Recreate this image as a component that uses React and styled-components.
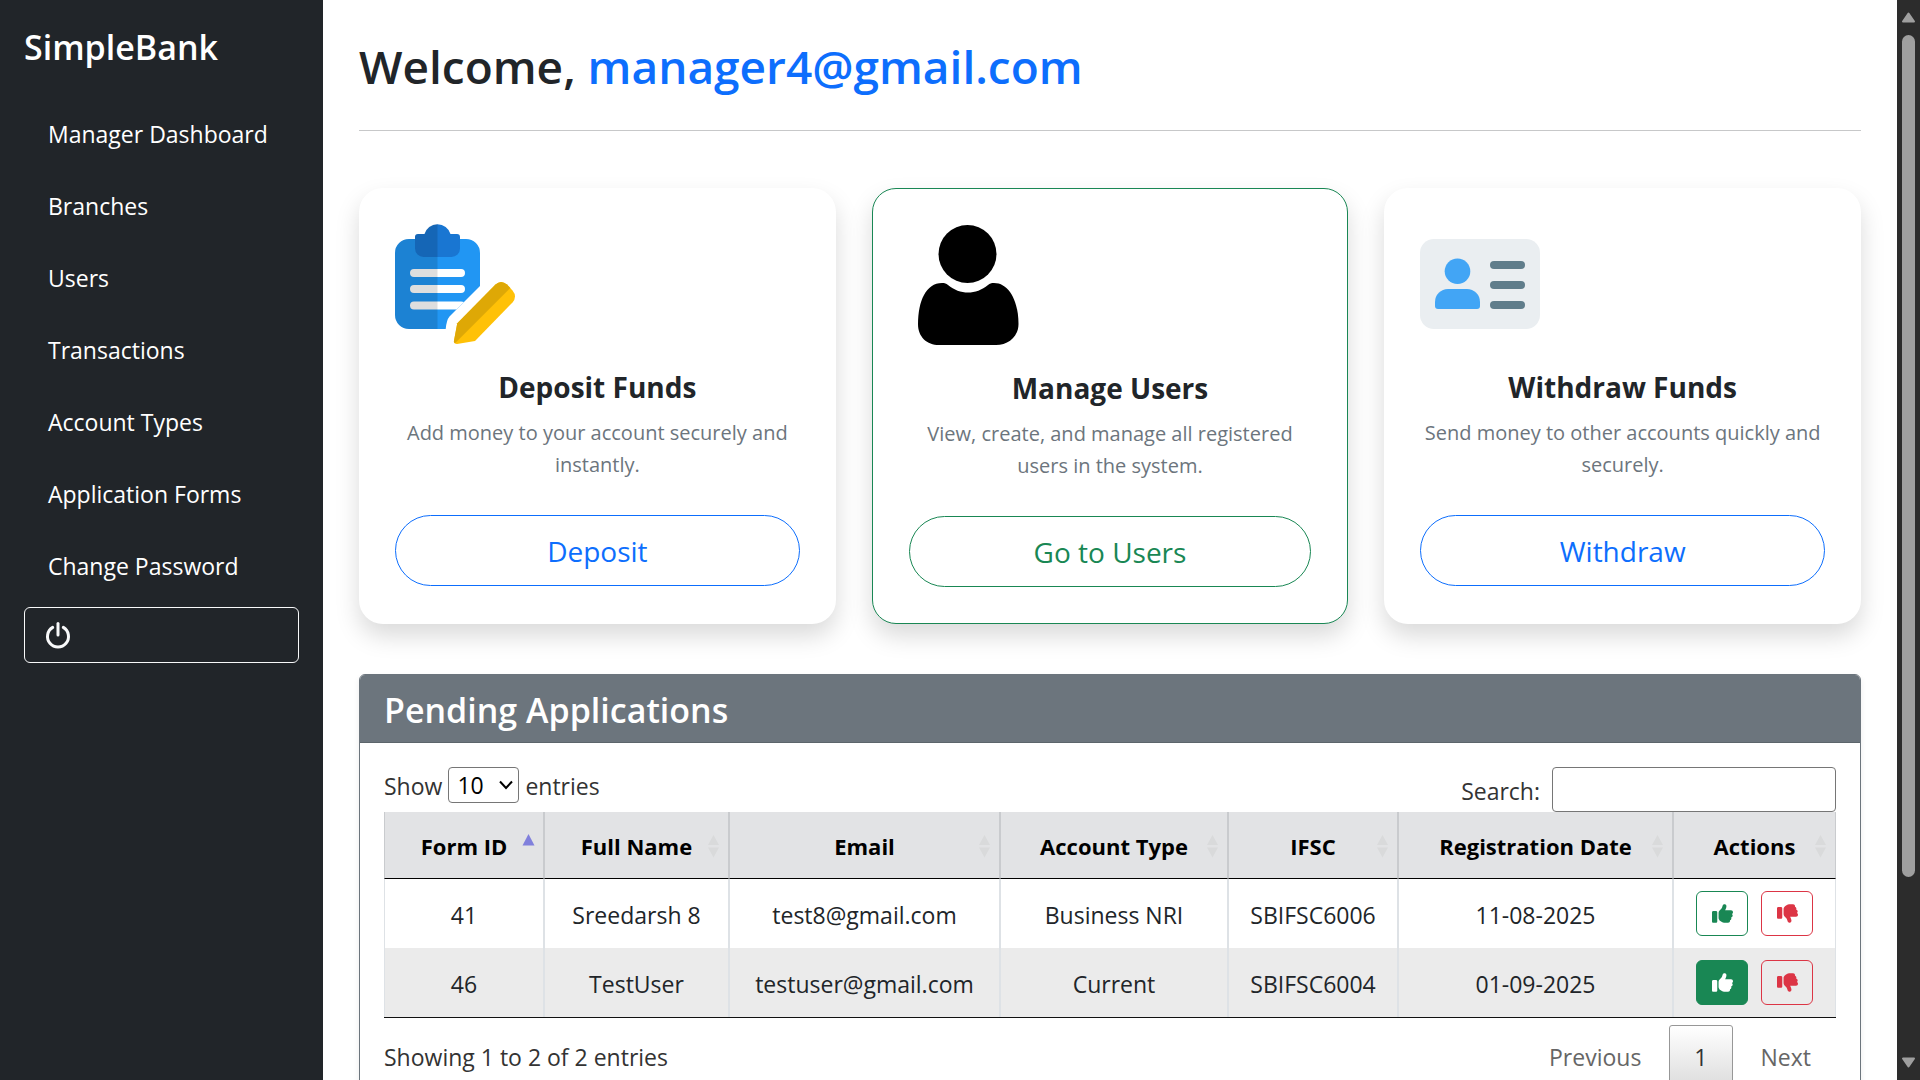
import React from 'react';
import styled, { createGlobalStyle, css } from 'styled-components';
import { FaThumbsUp, FaThumbsDown } from 'react-icons/fa6';

const color = {
  dark: '#212529',
  primary: '#0d6efd',
  success: '#198754',
  danger: '#dc3545',
  secondary: '#6c757d',
};

const GlobalStyle = createGlobalStyle`
  *, *::before, *::after { box-sizing: border-box; }
  body {
    margin: 0;
    background: #fff;
    color: ${color.dark};
    font-family: "Open Sans", "Noto Sans", sans-serif;
    font-size: 23px;
    line-height: 36px;
  }
`;

const Shell = styled.div`
  display: flex;
  height: 100vh;
  overflow: hidden;
`;

const Sidebar = styled.aside`
  flex: 0 0 323px;
  display: flex;
  flex-direction: column;
  padding: 24px;
  background: ${color.dark};
  color: #fff;
`;

const Brand = styled.div`
  margin-bottom: 28px;
  font-size: 34px;
  font-weight: 600;
  line-height: 46px;
`;

const Nav = styled.nav`
  display: flex;
  flex-direction: column;
`;

const NavLink = styled.a`
  padding: 18px 24px;
  color: #fff;
  text-decoration: none;
  white-space: nowrap;
`;

const LogoutButton = styled.button`
  display: flex;
  align-items: center;
  height: 56px;
  margin-top: 5px;
  padding: 0 20px;
  border: 1px solid #f8f9fa;
  border-radius: 6px;
  background: transparent;
  color: #f8f9fa;
`;

const Main = styled.main`
  flex: 1;
  min-width: 0;
  padding: 36px;
`;

const Welcome = styled.h1`
  margin: 0;
  font-size: 46px;
  font-weight: 600;
  line-height: 60px;

  span { color: ${color.primary}; }
`;

const Divider = styled.hr`
  height: 1px;
  margin: 34px 0 57px;
  border: 0;
  background: #c7c8c9;
`;

const Cards = styled.section`
  display: grid;
  grid-template-columns: repeat(3, 1fr);
  gap: 36px;
  margin-bottom: 50px;
`;

const Card = styled.article`
  display: flex;
  flex-direction: column;
  padding: 36px;
  border: ${(p) => (p.$outlined ? `1px solid ${color.success}` : '0')};
  border-radius: 24px;
  background: #fff;
  box-shadow: 0 12px 24px rgba(0, 0, 0, 0.15);
  text-align: center;
`;

const CardTitle = styled.h2`
  margin: 25px 0 12px;
  font-size: 28px;
  font-weight: 700;
  line-height: 36px;
`;

const CardText = styled.p`
  margin: 0 0 34px;
  color: ${color.secondary};
  font-size: 20px;
  line-height: 32px;
`;

const PillButton = styled.button`
  height: 71px;
  border: 1px solid ${(p) => color[p.$tone]};
  border-radius: 36px;
  background: transparent;
  color: ${(p) => color[p.$tone]};
  font: inherit;
  font-size: 28px;
`;

const Panel = styled.section`
  border: 1px solid ${color.secondary};
  border-radius: 6px;
  box-shadow: 0 3px 6px rgba(0, 0, 0, 0.075);
`;

const PanelTitle = styled.h2`
  margin: 0;
  padding: 14px 24px 10px;
  border-bottom: 1px solid #5c656b;
  border-radius: 5px 5px 0 0;
  background: ${color.secondary};
  color: #fff;
  font-size: 34px;
  font-weight: 600;
  line-height: 43px;
`;

const PanelBody = styled.div`
  padding: 24px;
`;

const Toolbar = styled.div`
  display: flex;
  justify-content: space-between;
  align-items: flex-start;
  color: #333;
`;

const LengthLabel = styled.label`
  display: flex;
  align-items: flex-start;
  gap: 6px;
  line-height: 38px;
`;

const SelectBox = styled.span`
  display: grid;
  grid-template: 36px / 71px;
  align-items: center;

  > * { grid-area: 1 / 1; }
  > svg { justify-self: end; margin-right: 6px; pointer-events: none; }
`;

const LengthSelect = styled.select`
  appearance: none;
  width: 100%;
  height: 36px;
  padding: 0 8px;
  border: 1px solid #767676;
  border-radius: 4px;
  background: #fff;
  color: #000;
  font: inherit;
  line-height: 34px;
`;

const SearchLabel = styled.label`
  display: flex;
  align-items: flex-end;
  gap: 12px;
  line-height: 42px;
`;

const SearchInput = styled.input`
  width: 284px;
  height: 45px;
  padding: 0 8px;
  border: 1px solid #767676;
  border-radius: 4px;
  background: #fff;
  font: inherit;
`;

const DataTable = styled.table`
  width: 100%;
  table-layout: fixed;
  border-spacing: 0;
  border-bottom: 1px solid #111;
  text-align: center;
`;

const HeadCell = styled.th`
  position: relative;
  height: 67px;
  padding: 2px 0 0;
  border: solid #c9cbce;
  border-width: 0 1px;
  border-bottom: 1px solid #000;
  background: #e2e3e5;
  color: #000;
  font-size: 22px;
  font-weight: 700;
  white-space: nowrap;
`;

const SortIcon = styled.svg`
  position: absolute;
  top: 22px;
  right: 8px;
`;

const BodyRow = styled.tr`
  background: #fff;
  &:nth-child(even) { background: #ebebeb; }
`;

const Cell = styled.td`
  height: 69px;
  padding: ${(p) => (p.$controls ? '0' : '2px 0 0')};
  border: solid #dee2e6;
  border-width: 0 1px;
  white-space: nowrap;
`;

const Actions = styled.div`
  display: flex;
  justify-content: center;
  gap: 13px;
`;

const IconButton = styled.button`
  display: grid;
  place-items: center;
  width: 52px;
  height: 45px;
  padding: 0;
  border: 1px solid ${(p) => color[p.$tone]};
  border-radius: 6px;
  background: transparent;
  color: ${(p) => color[p.$tone]};
  font-size: 21px;

  ${(p) => p.$filled && css`
    background: ${color[p.$tone]};
    color: #fff;
  `}
`;

const TableFooter = styled.div`
  display: flex;
  justify-content: space-between;
  align-items: center;
  padding-top: 7px;
  color: #333;
`;

const Pager = styled.nav`
  display: flex;
  gap: 3px;
`;

const PageButton = styled.button`
  padding: 13px 24px;
  border: 1px solid transparent;
  border-radius: 3px;
  background: transparent;
  color: #666;
  font: inherit;

  ${(p) => p.$current && css`
    border-color: #979797;
    background: linear-gradient(to bottom, #fff 0%, #dcdcdc 100%);
    color: #333;
  `}
`;

const ScrollTrack = styled.div`
  flex: 0 0 23px;
  display: flex;
  flex-direction: column;
  align-items: center;
  padding: 12px 0;
  background: #2c2c2c;
`;

const ScrollThumb = styled.div`
  flex: 842;
  width: 13px;
  margin-top: 12px;
  border-radius: 7px;
  background: #9f9f9f;
`;

const ScrollRest = styled.div`
  flex: 180;
`;

const PowerIcon = () => (
  <svg width="26" height="28" viewBox="0 0 26 28" fill="none" stroke="currentColor" strokeWidth="3" strokeLinecap="round" aria-hidden="true">
    <path d="M13 2.5V14" />
    <path d="M7.7 6.4A10.5 10.5 0 1 0 18.3 6.4" />
  </svg>
);

const ClipboardIcon = () => (
  <svg width="120" height="120" viewBox="0 0 120 120" aria-hidden="true">
    <path fill="#2196f3" d="M14 15H71a14 14 0 0 1 14 14V62L54.5 92.500Q51.500 96 50.700 105H14A14 14 0 0 1 0 91V29A14 14 0 0 1 14 15Z" />
    <path fill="#fff" d="M19 45H66a4 4 0 0 1 0 8H19a4 4 0 0 1 0-8ZM19 61H66a4 4 0 0 1 0 8H19a4 4 0 0 1 0-8ZM19 77.500H66Q68 77.500 69 78L61.500 85.500H19a4 4 0 0 1 0-8Z" />
    <path fill="#1976d2" d="M23 10H29.500A13.500 13.500 0 0 1 55.500 10H62a3 3 0 0 1 3 3V24.500a8.500 8.500 0 0 1-8.500 8.500H28.500A8.500 8.500 0 0 1 20 24.500V13a3 3 0 0 1 3-3Z" />
    <path fill="#000" fillOpacity="0.13" d="M42.500 0A13.500 13.500 0 0 0 29.500 10H23a3 3 0 0 0-3 3V15H14A14 14 0 0 0 0 29V91a14 14 0 0 0 14 14H42.500Z" />
    <path fill="#ffc107" d="M62.300 99.300L100.500 60.500Q106 55.500 112 60.500L117.500 66.500Q122.500 72.500 117.500 78.500L80 117L62 120Q58.500 120 59 116.500Z" />
    <path fill="#dea806" d="M62.300 99.300L100.500 60.500Q106 55.500 112 60.500L115.300 64L60 119.300Q58.700 118.500 59 116.500Z" />
  </svg>
);

const PersonIcon = () => (
  <svg width="120" height="120" viewBox="0 0 120 120" aria-hidden="true">
    <circle cx="58.500" cy="29" r="29" />
    <path d="M39 60C51 70 67 70 79 60C81 58.500 82 58 85 58C100 58 109.500 76 109.500 99C109.500 112 99 120 87 120H30C18 120 9 112 9 99C9 76 17 58 33 58C36 58 37 58.500 39 60Z" />
  </svg>
);

const IdCardIcon = () => (
  <svg width="120" height="120" viewBox="0 0 120 120" aria-hidden="true">
    <rect y="15" width="120" height="90" rx="14" fill="#eaeef1" />
    <circle cx="37.500" cy="47.300" r="12.800" fill="#42a5f5" />
    <path fill="#42a5f5" d="M28 65H47A13 13 0 0 1 60 78V82a3 3 0 0 1-3 3H18a3 3 0 0 1-3-3V78A13 13 0 0 1 28 65Z" />
    <g fill="#607d8b">
      <rect x="70" y="37" width="35" height="8" rx="4" />
      <rect x="70" y="57" width="35" height="8" rx="4" />
      <rect x="70" y="77" width="35" height="8" rx="4" />
    </g>
  </svg>
);

const Chevron = () => (
  <svg width="14" height="10" viewBox="0 0 14 10" fill="none" stroke="#000" strokeWidth="2" aria-hidden="true">
    <path d="M1 1.500L7 8L13 1.500" />
  </svg>
);

const SortArrows = ({ ascending }) => (
  <SortIcon width="13" height="24" viewBox="0 0 13 24" aria-hidden="true">
    {ascending ? (
      <path d="M6.500 0L12.500 11.500H0.500Z" fill="#8080dc" />
    ) : (
      <path d="M6.500 1L12 11H1ZM1 13.500H12L6.500 23.500Z" fill="#d9dadb" />
    )}
  </SortIcon>
);

const ScrollArrow = ({ down }) => (
  <svg width="15" height="11" viewBox="0 0 15 11" aria-hidden="true">
    <path
      d={down ? 'M2 1.500H13L7.500 9.500Z' : 'M2 9.500H13L7.500 1.500Z'}
      fill="#9f9f9f" stroke="#9f9f9f" strokeWidth="2" strokeLinejoin="round"
    />
  </svg>
);

const links = ['Manager Dashboard', 'Branches', 'Users', 'Transactions', 'Account Types', 'Application Forms', 'Change Password'];

const cards = [
  { title: 'Deposit Funds', text: 'Add money to your account securely and instantly.', action: 'Deposit', tone: 'primary', Icon: ClipboardIcon },
  { title: 'Manage Users', text: 'View, create, and manage all registered users in the system.', action: 'Go to Users', tone: 'success', Icon: PersonIcon, outlined: true },
  { title: 'Withdraw Funds', text: 'Send money to other accounts quickly and securely.', action: 'Withdraw', tone: 'primary', Icon: IdCardIcon },
];

const columns = [
  ['Form ID', 160], ['Full Name', 185], ['Email', 271], ['Account Type', 228],
  ['IFSC', 170], ['Registration Date', 275], ['Actions', 163],
];

const applications = [
  { cells: ['41', 'Sreedarsh 8', 'test8@gmail.com', 'Business NRI', 'SBIFSC6006', '11-08-2025'] },
  { cells: ['46', 'TestUser', 'testuser@gmail.com', 'Current', 'SBIFSC6004', '01-09-2025'], active: true },
];

export default function App() {
  return (
    <Shell>
      <GlobalStyle />
      <Sidebar>
        <Brand>SimpleBank</Brand>
        <Nav aria-label="Main">
          {links.map((label) => <NavLink href="#" key={label}>{label}</NavLink>)}
        </Nav>
        <LogoutButton type="button" aria-label="Log out"><PowerIcon /></LogoutButton>
      </Sidebar>

      <Main>
        <Welcome>Welcome, <span>manager4@gmail.com</span></Welcome>
        <Divider />
        <Cards>
          {cards.map(({ title, text, action, tone, Icon, outlined }) => (
            <Card key={title} $outlined={outlined}>
              <Icon />
              <CardTitle>{title}</CardTitle>
              <CardText>{text}</CardText>
              <PillButton type="button" $tone={tone}>{action}</PillButton>
            </Card>
          ))}
        </Cards>

        <Panel>
          <PanelTitle>Pending Applications</PanelTitle>
          <PanelBody>
            <Toolbar>
              <LengthLabel>
                Show
                <SelectBox>
                  <LengthSelect defaultValue="10">
                    <option>10</option>
                    <option>25</option>
                    <option>50</option>
                  </LengthSelect>
                  <Chevron />
                </SelectBox>
                entries
              </LengthLabel>
              <SearchLabel>
                Search:
                <SearchInput type="search" />
              </SearchLabel>
            </Toolbar>
            <DataTable>
              <colgroup>
                {columns.map(([name, width]) => <col key={name} width={width} />)}
              </colgroup>
              <thead>
                <tr>
                  {columns.map(([name], i) => (
                    <HeadCell key={name} scope="col">
                      {name}
                      <SortArrows ascending={i === 0} />
                    </HeadCell>
                  ))}
                </tr>
              </thead>
              <tbody>
                {applications.map(({ cells, active }) => (
                  <BodyRow key={cells[0]}>
                    {cells.map((cell) => <Cell key={cell}>{cell}</Cell>)}
                    <Cell $controls>
                      <Actions>
                        <IconButton type="button" $tone="success" $filled={active} aria-label="Approve"><FaThumbsUp /></IconButton>
                        <IconButton type="button" $tone="danger" aria-label="Reject"><FaThumbsDown /></IconButton>
                      </Actions>
                    </Cell>
                  </BodyRow>
                ))}
              </tbody>
            </DataTable>
            <TableFooter>
              <span>Showing 1 to 2 of 2 entries</span>
              <Pager aria-label="Pages">
                <PageButton type="button">Previous</PageButton>
                <PageButton type="button" $current>1</PageButton>
                <PageButton type="button">Next</PageButton>
              </Pager>
            </TableFooter>
          </PanelBody>
        </Panel>
      </Main>

      <ScrollTrack aria-hidden="true">
        <ScrollArrow />
        <ScrollThumb />
        <ScrollRest />
        <ScrollArrow down />
      </ScrollTrack>
    </Shell>
  );
}
